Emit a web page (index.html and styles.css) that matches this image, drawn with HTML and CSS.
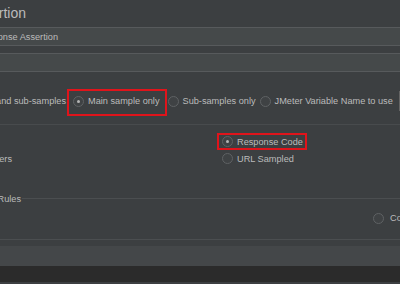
FILE: index.html
```html
<html>
<head>
    <title>Response Assertion</title>
    <link rel="stylesheet" href="styles.css">
</head>
<body>

<!-- Naslov panela -->
<div class="title-row">
    <span class="clip-end title-end">Response Assertion</span>
</div>

<!-- Polje za ime -->
<div class="field">
    <span class="clip-end name-end">Response Assertion</span>
</div>

<!-- Polje za komentare -->
<div class="field comments"></div>

<!-- Apply to -->
<div class="apply-row">
    <span class="clip-end apply-end">Main sample and sub-samples</span>
    <label class="radio marked apply-marked"><span class="dot on"></span>Main sample only</label>
    <label class="radio"><span class="dot"></span>Sub-samples only</label>
    <label class="radio"><span class="dot"></span>JMeter Variable Name to use</label>
    <span class="var-input"></span>
</div>

<!-- Field to Test -->
<div class="group">
    <div class="test-grid">
        <span></span>
        <label class="radio marked code-marked"><span class="dot on"></span>Response Code</label>
        <span class="clip-end headers-end">Response Headers</span>
        <label class="radio plain"><span class="dot"></span>URL Sampled</label>
    </div>
</div>

<!-- Pattern Matching Rules -->
<div class="legend">
    <span class="clip-end rules-end">Pattern Matching Rules</span>
    <span class="legend-line"></span>
</div>
<div class="rules-row">
    <label class="radio"><span class="dot"></span>Contains</label>
</div>

<div class="pattern-line"></div>
<div class="pattern-head"></div>
<div class="footer"></div>

</body>
</html>
```

FILE: styles.css
```css
/* Osnova */
body {
    margin: 0;
    width: 400px;
    height: 284px;
    overflow: hidden;
    background-color: #3c3f41;
    color: #bbbbbb;
    font-family: 'Liberation Sans', Arial, sans-serif;
    font-size: 9.2px;
}

/* Tekst koji je odsečen levo - desna ivica je fiksna */
.clip-end {
    display: flex;
    justify-content: flex-end;
    white-space: nowrap;
    flex-shrink: 0;
}

.title-row {
    height: 27px;
    display: flex;
    align-items: center;
    font-size: 14px;
    padding-bottom: 2px;
    box-sizing: border-box;
}

.title-end {
    width: 26px;
}

/* Polja za unos */
.field {
    height: 19px;
    box-sizing: border-box;
    background-color: #45494a;
    border-top: 1px solid #575a5c;
    border-bottom: 1px solid #575a5c;
    display: flex;
    align-items: center;
}

.name-end {
    width: 58px;
}

.comments {
    margin-top: 7px;
}

/* Radio dugmad */
.radio {
    display: flex;
    align-items: center;
    gap: 4px;
    white-space: nowrap;
}

.dot {
    width: 11px;
    height: 11px;
    box-sizing: border-box;
    border: 1px solid #5f6264;
    border-radius: 50%;
    background-color: #3f4244;
    display: flex;
    align-items: center;
    justify-content: center;
    flex-shrink: 0;
}

.dot.on::after {
    content: "";
    width: 3px;
    height: 3px;
    border-radius: 50%;
    background-color: #b4b4b4;
}

.marked {
    border: 2px solid #e0141b;
}

/* Apply to red */
.apply-row {
    margin-top: 17px;
    height: 27px;
    padding-bottom: 3px;
    box-sizing: border-box;
    display: flex;
    align-items: center;
}

.apply-end {
    width: 66px;
}

.apply-marked {
    margin-left: 1px;
    height: 27px;
    box-sizing: border-box;
    padding: 0 5px 3px 4px;
    margin-top: 3px;
}

.apply-row .radio + .radio {
    margin-left: 1px;
}

.apply-row .radio + .radio + .radio {
    margin-left: 4px;
}

.var-input {
    margin-left: 6px;
    width: 20px;
    height: 18px;
    border: 1px solid #646464;
    background-color: #45494a;
}

/* Field to Test */
.group {
    margin-top: 8px;
    border-top: 1px solid #484b4d;
    padding-top: 8px;
}

.test-grid {
    display: grid;
    grid-template-columns: 217px auto;
    grid-auto-rows: 17px;
    align-items: center;
}

.test-grid .radio {
    justify-self: start;
    height: 17px;
    box-sizing: border-box;
    padding: 0 2px 0 3px;
}

.plain {
    border: 2px solid transparent;
}

.headers-end {
    width: 12px;
}

/* Pattern Matching Rules */
.legend {
    margin-top: 25px;
    height: 13px;
    display: flex;
    align-items: center;
}

.rules-end {
    width: 21px;
}

.legend-line {
    flex: 1;
    margin-left: 1px;
    border-top: 1px solid #4b4e50;
}

.rules-row {
    margin-top: 6px;
    height: 14px;
    display: flex;
    align-items: center;
    padding-left: 373px;
}

.rules-row .radio {
    gap: 6px;
}

.pattern-line {
    margin-top: 14px;
    border-top: 1px solid #4b4e50;
}

.pattern-head {
    margin-top: 6px;
    height: 20px;
    background-color: #444749;
}

.footer {
    height: 16px;
    background-color: #2b2b2b;
}
```
